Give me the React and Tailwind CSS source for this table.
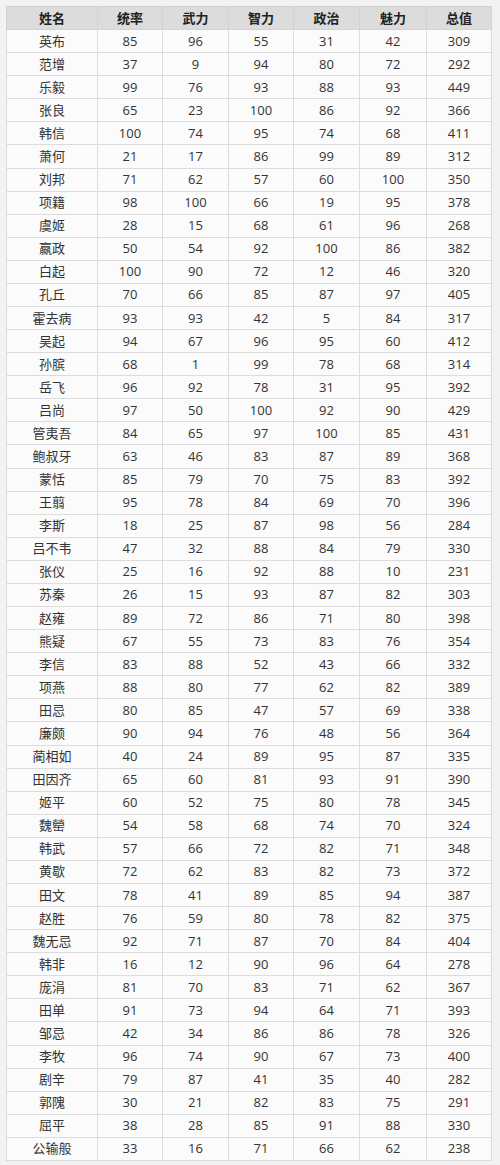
import React from 'react'

const HEAD = ['姓名', '统率', '武力', '智力', '政治', '魅力', '总值']

const ROWS = `英布 85 96 55 31 42 309
范增 37 9 94 80 72 292
乐毅 99 76 93 88 93 449
张良 65 23 100 86 92 366
韩信 100 74 95 74 68 411
萧何 21 17 86 99 89 312
刘邦 71 62 57 60 100 350
项籍 98 100 66 19 95 378
虞姬 28 15 68 61 96 268
嬴政 50 54 92 100 86 382
白起 100 90 72 12 46 320
孔丘 70 66 85 87 97 405
霍去病 93 93 42 5 84 317
吴起 94 67 96 95 60 412
孙膑 68 1 99 78 68 314
岳飞 96 92 78 31 95 392
吕尚 97 50 100 92 90 429
管夷吾 84 65 97 100 85 431
鲍叔牙 63 46 83 87 89 368
蒙恬 85 79 70 75 83 392
王翦 95 78 84 69 70 396
李斯 18 25 87 98 56 284
吕不韦 47 32 88 84 79 330
张仪 25 16 92 88 10 231
苏秦 26 15 93 87 82 303
赵雍 89 72 86 71 80 398
熊疑 67 55 73 83 76 354
李信 83 88 52 43 66 332
项燕 88 80 77 62 82 389
田忌 80 85 47 57 69 338
廉颇 90 94 76 48 56 364
蔺相如 40 24 89 95 87 335
田因齐 65 60 81 93 91 390
姬平 60 52 75 80 78 345
魏罃 54 58 68 74 70 324
韩武 57 66 72 82 71 348
黄歇 72 62 83 82 73 372
田文 78 41 89 85 94 387
赵胜 76 59 80 78 82 375
魏无忌 92 71 87 70 84 404
韩非 16 12 90 96 64 278
庞涓 81 70 83 71 62 367
田单 91 73 94 64 71 393
邹忌 42 34 86 86 78 326
李牧 96 74 90 67 73 400
剧辛 79 87 41 35 40 282
郭隗 30 21 82 83 75 291
屈平 38 28 85 91 88 330
公输般 33 16 71 66 62 238`
  .split('\n')
  .map((line) => line.split(' '))

const WIDTHS = ['w-[91px]', 'w-[65px]', 'w-[66px]', 'w-[65px]', 'w-[66px]', 'w-[67px]', 'w-[65px]']

export default function App() {
  return (
    <div className="min-h-[1165px] w-[500px] bg-[#f2f2f2] pt-[6px] pl-[6px] font-['Open_Sans','Noto_Sans_CJK_SC',sans-serif] text-[13px] text-[#333]">
      <table className="w-[485px] table-fixed border-collapse border border-[#d8d8d8] bg-[#fbfbfb] text-center">
        <colgroup>
          {WIDTHS.map((w, i) => <col key={i} className={w} />)}
        </colgroup>
        <thead>
          <tr className="h-[23.08px] bg-[#dcdcdc]">
            {HEAD.map((h) => (
              <th key={h} className="border border-[#d3d3d3] p-0 font-bold text-[#222] leading-none">{h}</th>
            ))}
          </tr>
        </thead>
        <tbody>
          {ROWS.map((r) => (
            <tr key={r[0]} className="h-[23.08px]">
              {r.map((c, i) => (
                <td key={i} className="border border-[#dcdcdc] p-0 leading-none">{c}</td>
              ))}
            </tr>
          ))}
        </tbody>
      </table>
    </div>
  )
}
